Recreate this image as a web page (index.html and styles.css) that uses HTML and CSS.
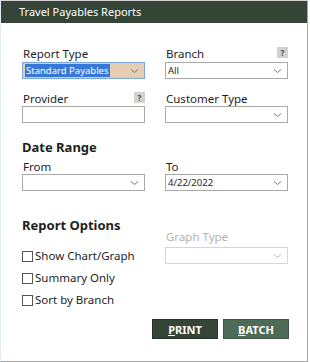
FILE: index.html
```html
<!DOCTYPE html>
<html lang="en">
<head>
    <meta charset="UTF-8">
    <title>Travel Payables Reports</title>
    <link rel="stylesheet" href="styles.css">
</head>
<body>
    <div class="window">
        <div class="titlebar">Travel Payables Reports</div>

        <div class="content">
            <div class="grid row-first">
                <div class="field">
                    <div class="label">Report Type</div>
                    <div class="combo active">
                        <span class="sel">Standard Payables</span>
                        <svg class="chev" width="9" height="6" viewBox="0 0 9 6"><path d="M1 1.5 L4.5 4.5 L8 1.5" fill="none" stroke="#777" stroke-width="1"/></svg>
                    </div>
                </div>
                <div class="field">
                    <div class="label">Branch <span class="help">?</span></div>
                    <div class="combo">
                        <span class="val">All</span>
                        <svg class="chev" width="9" height="6" viewBox="0 0 9 6"><path d="M1 1.5 L4.5 4.5 L8 1.5" fill="none" stroke="#777" stroke-width="1"/></svg>
                    </div>
                </div>
            </div>

            <div class="grid row-second">
                <div class="field">
                    <div class="label">Provider <span class="help">?</span></div>
                    <div class="textbox"></div>
                </div>
                <div class="field">
                    <div class="label">Customer Type</div>
                    <div class="combo">
                        <span class="val"></span>
                        <svg class="chev" width="9" height="6" viewBox="0 0 9 6"><path d="M1 1.5 L4.5 4.5 L8 1.5" fill="none" stroke="#777" stroke-width="1"/></svg>
                    </div>
                </div>
            </div>

            <h2 class="heading date-heading">Date Range</h2>
            <div class="grid row-dates">
                <div class="field">
                    <div class="label">From</div>
                    <div class="combo">
                        <span class="val"></span>
                        <svg class="chev" width="9" height="6" viewBox="0 0 9 6"><path d="M1 1.5 L4.5 4.5 L8 1.5" fill="none" stroke="#777" stroke-width="1"/></svg>
                    </div>
                </div>
                <div class="field">
                    <div class="label">To</div>
                    <div class="combo">
                        <span class="val">4/22/2022</span>
                        <svg class="chev" width="9" height="6" viewBox="0 0 9 6"><path d="M1 1.5 L4.5 4.5 L8 1.5" fill="none" stroke="#777" stroke-width="1"/></svg>
                    </div>
                </div>
            </div>

            <div class="grid row-options">
                <div class="options">
                    <h2 class="heading">Report Options</h2>
                    <label class="check"><span class="box"></span>Show Chart/Graph</label>
                    <label class="check"><span class="box"></span>Summary Only</label>
                    <label class="check"><span class="box"></span>Sort by Branch</label>
                </div>
                <div class="field graph">
                    <div class="label">Graph Type</div>
                    <div class="combo">
                        <span class="val"></span>
                        <svg class="chev" width="9" height="6" viewBox="0 0 9 6"><path d="M1 1.5 L4.5 4.5 L8 1.5" fill="none" stroke="#bbb" stroke-width="1"/></svg>
                    </div>
                </div>
            </div>

            <div class="buttons">
                <button class="btn print"><u>P</u>RINT</button>
                <button class="btn batch"><u>B</u>ATCH</button>
            </div>
        </div>
    </div>
</body>
</html>
```

FILE: styles.css
```css
body {
    margin: 0;
    font-family: "Noto Sans", "Open Sans", sans-serif;
    font-size: 11.5px;
    color: #1e1e1e;
    background: #fff;
}
.window {
    width: 306px;
    height: 360px;
    border-left: 1px solid #e3ebf3;
    border-top: 1px solid #d4d4d4;
    border-right: 1px solid #a6a6a6;
    border-bottom: 1px solid #a6a6a6;
    background: #fff;
}
.titlebar {
    height: 22px;
    line-height: 22px;
    padding-left: 18px;
    background: #344538;
    color: #fff;
    font-size: 11px;
}
.content {
    padding: 0 18px 0 21px;
}
.grid {
    display: grid;
    grid-template-columns: 123px 123px;
    column-gap: 20px;
}
.row-first {
    margin-top: 24px;
}
.row-second {
    margin-top: 13px;
}
.row-dates {
    margin-top: 4px;
}
.row-options {
    margin-top: 25px;
}
.label {
    height: 14px;
    line-height: 14px;
    display: flex;
    justify-content: space-between;
    align-items: flex-end;
    padding-left: 1px;
}
.help {
    width: 11px;
    height: 11px;
    line-height: 11px;
    margin-bottom: 3px;
    background: #d2d2d2;
    color: #4a4a4a;
    font-size: 8px;
    font-weight: bold;
    text-align: center;
}
.combo, .textbox {
    box-sizing: border-box;
    height: 17px;
    margin-top: 1px;
    border: 1px solid #a9a9a9;
    background: #fff;
    display: flex;
    align-items: center;
    justify-content: space-between;
    padding: 0 5px 0 2px;
    font-size: 9.5px;
}
.combo.active {
    background: #e6cdb2;
    border-color: #7aa7dd;
}
.sel {
    background: #3777d8;
    color: #fff;
    padding: 0 1px;
    line-height: 13px;
}
.val {
    line-height: 13px;
}
.chev {
    display: block;
}
.row-second .textbox, .row-second .combo, .row-dates .combo {
    margin-top: 0;
}
.heading {
    margin: 0;
    font-size: 13px;
    font-weight: bold;
    line-height: 18px;
}
.date-heading {
    margin-top: 15px;
}
.options {
    display: flex;
    flex-direction: column;
}
.check {
    display: flex;
    align-items: center;
    height: 22px;
    line-height: 22px;
}
.options .heading {
    margin-bottom: 11px;
}
.box {
    box-sizing: border-box;
    width: 11px;
    height: 11px;
    border: 1px solid #555;
    margin-right: 2px;
    background: #fff;
}
.graph {
    margin-top: 14px;
}
.graph .label {
    color: #b3b3b3;
}
.graph .combo {
    margin-top: 3px;
    border-color: #d6d6d6;
}
.buttons {
    display: flex;
    justify-content: flex-end;
    gap: 5px;
    margin-top: 8px;
}
.btn {
    width: 66px;
    height: 20px;
    border: none;
    color: #fff;
    font-family: "Noto Sans", "Open Sans", sans-serif;
    font-size: 11px;
    font-weight: bold;
    padding: 0;
}
.print {
    background: #344538;
    border: 1px solid #24302a;
}
.batch {
    background: #4e6b58;
    border: 1px solid #3f5848;
}
```
